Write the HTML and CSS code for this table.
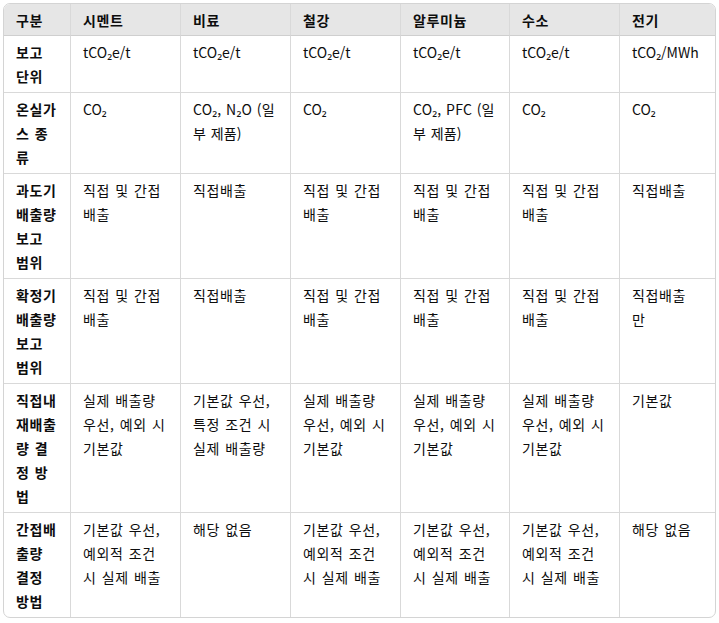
FILE: index.html
```html
<!DOCTYPE html>
<html lang="ko">
<head>
<meta charset="utf-8">
<title>배출량 비교</title>
<link rel="stylesheet" href="styles.css">
</head>
<body>
<div class="table-wrap">
  <table class="data">
    <colgroup>
      <col class="c-label">
      <col class="c-mid">
      <col class="c-mid">
      <col class="c-mid">
      <col class="c-mid5">
      <col class="c-mid">
      <col class="c-last">
    </colgroup>
    <thead>
      <tr>
        <th>구분</th>
        <th>시멘트</th>
        <th>비료</th>
        <th>철강</th>
        <th>알루미늄</th>
        <th>수소</th>
        <th>전기</th>
      </tr>
    </thead>
    <tbody>
      <tr>
        <td class="label">보고 단위</td>
        <td class="en">tCO₂e/t</td>
        <td class="en">tCO₂e/t</td>
        <td class="en">tCO₂e/t</td>
        <td class="en">tCO₂e/t</td>
        <td class="en">tCO₂e/t</td>
        <td class="en">tCO₂/MWh</td>
      </tr>
      <tr>
        <td class="label">온실가스 종류</td>
        <td class="en">CO₂</td>
        <td class="mixed">CO₂, N₂O (일부 제품)</td>
        <td class="en">CO₂</td>
        <td class="mixed">CO₂, PFC (일부 제품)</td>
        <td class="en">CO₂</td>
        <td class="en">CO₂</td>
      </tr>
      <tr>
        <td class="label">과도기 배출량 보고 범위</td>
        <td>직접 및 간접 배출</td>
        <td>직접배출</td>
        <td>직접 및 간접 배출</td>
        <td>직접 및 간접 배출</td>
        <td>직접 및 간접 배출</td>
        <td>직접배출</td>
      </tr>
      <tr>
        <td class="label">확정기 배출량 보고 범위</td>
        <td>직접 및 간접 배출</td>
        <td>직접배출</td>
        <td>직접 및 간접 배출</td>
        <td>직접 및 간접 배출</td>
        <td>직접 및 간접 배출</td>
        <td>직접배출만</td>
      </tr>
      <tr>
        <td class="label">직접내재배출량 결정 방법</td>
        <td>실제 배출량 우선, 예외 시 기본값</td>
        <td>기본값 우선, 특정 조건 시 실제 배출량</td>
        <td>실제 배출량 우선, 예외 시 기본값</td>
        <td>실제 배출량 우선, 예외 시 기본값</td>
        <td>실제 배출량 우선, 예외 시 기본값</td>
        <td>기본값</td>
      </tr>
      <tr>
        <td class="label">간접배출량 결정 방법</td>
        <td>기본값 우선, 예외적 조건 시 실제 배출</td>
        <td>해당 없음</td>
        <td>기본값 우선, 예외적 조건 시 실제 배출</td>
        <td>기본값 우선, 예외적 조건 시 실제 배출</td>
        <td>기본값 우선, 예외적 조건 시 실제 배출</td>
        <td>해당 없음</td>
      </tr>
    </tbody>
  </table>
</div>
</body>
</html>
```

FILE: styles.css
```css
html, body {
  margin: 0;
  padding: 0;
  background: #ffffff;
}

body {
  padding: 3px;
  font-family: "Noto Sans CJK KR", "Noto Sans", sans-serif;
  font-size: 14px;
  color: #0d0d0d;
}

.table-wrap {
  width: 711px;
  border: 1px solid #d4d4d4;
  border-radius: 7px;
  overflow: hidden;
}

.data {
  width: 711px;
  table-layout: fixed;
  border-collapse: separate;
  border-spacing: 0;
}

.c-label { width: 67px; }
.c-mid { width: 110px; }
.c-mid5 { width: 109px; }
.c-last { width: 95px; }

.data th,
.data td {
  text-align: left;
  vertical-align: top;
  line-height: 24px;
  padding: 4px 12px;
  border-right: 1px solid #d9d9d9;
  border-bottom: 1px solid #d9d9d9;
  letter-spacing: 0.6px;
  word-spacing: 0.8px;
}

.data th {
  background: #e6e6e6;
  font-weight: 700;
  padding-bottom: 3px;
  border-bottom-color: #cfcfcf;
}

.data th:last-child,
.data td:last-child {
  border-right: none;
  padding-right: 18px;
}

.data tbody tr:last-child td {
  border-bottom: none;
}

.data td.label {
  font-weight: 700;
}

.data td.en {
  letter-spacing: 0;
  word-spacing: 0;
}

.data td.mixed {
  letter-spacing: 0.2px;
  word-spacing: 0.5px;
}
```
